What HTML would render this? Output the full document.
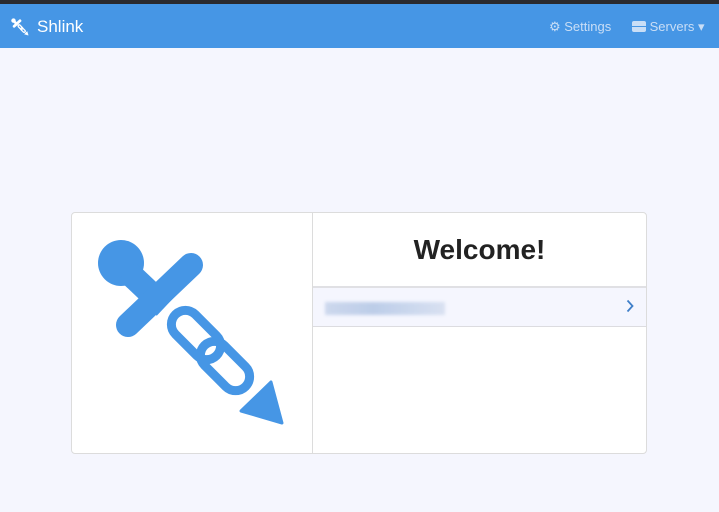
<!DOCTYPE html>
<html><head><meta charset="utf-8"><style>
*{box-sizing:border-box;margin:0;padding:0}
body{width:719px;height:512px;background:#f5f6fe;font-family:"Liberation Sans",sans-serif;overflow:hidden;position:relative}
.top{position:absolute;left:0;top:0;width:719px;height:4px;background:#2a2a2e}
.nav{position:absolute;left:0;top:4px;width:719px;height:44px;background:#4696e5;color:#fff}
.brand{position:absolute;left:37px;top:13px;font-size:17px}
.nr{position:absolute;top:15px;font-size:13px;color:#c9def6}
.card{position:absolute;left:71px;top:212px;width:576px;height:242px;background:#fff;border:1px solid #dcdcdc;border-radius:4px;overflow:hidden}
.div{position:absolute;left:240px;top:0;width:1px;height:100%;background:#dcdcdc}
.welcome{position:absolute;left:241px;top:0;right:0;height:73px;text-align:center;line-height:74px;font-size:28px;font-weight:bold;color:#222}
.row{position:absolute;left:241px;right:0;top:73px;height:41px;background:#f5f6fe;border-top:2px solid #e0e0e4;border-bottom:1px solid #dcdce0}
.blur{position:absolute;left:12px;top:14px;width:120px;height:13px;background:linear-gradient(90deg,#c9d5ec,#b7c9e6 40%,#c6d4ec 70%,#d6dff0);filter:blur(1.5px);opacity:.9}
</style></head><body>
<div class="top"></div>
<div class="nav">
<svg style="position:absolute;left:9px;top:12px" width="22" height="22" viewBox="0 0 240 240">
<g fill="#fff" stroke="#fff"><circle cx="49" cy="50" r="24" stroke="none"/><line x1="55" y1="58" x2="95" y2="96" stroke-width="28"/><line x1="120" y1="52" x2="56" y2="112" stroke-width="30" stroke-linecap="round"/>
<rect x="95" y="109" width="58" height="25" rx="12.5" transform="rotate(45 124 121.5)" fill="none" stroke-width="14"/><rect x="124" y="141" width="58" height="25" rx="12.5" transform="rotate(45 153 153.5)" fill="none" stroke-width="14"/><polygon points="168,198 198,168 210,210" stroke-width="4" stroke-linejoin="round"/></g></svg>
<div class="brand">Shlink</div>
<div class="nr" style="left:549px">⚙ Settings</div>
<div class="nr" style="left:632px"><span style="display:inline-block;width:14px;height:11px;background:#4696e5;border-radius:2px;vertical-align:-1px;border-top:5px solid #c9def6;border-bottom:5px solid #c9def6"></span> Servers ▾</div>
</div>
<div class="card">
<svg style="position:absolute;left:0;top:0" width="240" height="240" viewBox="0 0 240 240">
<g fill="#4696e5" stroke="#4696e5"><circle cx="49" cy="50" r="23" stroke="none"/><line x1="55" y1="58" x2="93" y2="94" stroke-width="24"/><line x1="119" y1="52" x2="56" y2="112" stroke-width="24" stroke-linecap="round"/>
<line x1="125" y1="72" x2="75" y2="122" stroke="#fff" stroke-width="4"/>
<rect x="95" y="108" width="58" height="28" rx="14" transform="rotate(45 124 122)" fill="none" stroke-width="9"/><rect x="124" y="139" width="58" height="28" rx="14" transform="rotate(45 153 153)" fill="none" stroke-width="9"/><polygon points="169,198 199,169 210,210" stroke-width="3" stroke-linejoin="round"/></g></svg>
<div class="div"></div>
<div class="welcome">Welcome!</div>
<div class="row"><div class="blur"></div>
<svg style="position:absolute;right:12px;top:11px" width="8" height="14" viewBox="0 0 8 14"><path d="M1.5 1.5 L6.5 7 L1.5 12.5" fill="none" stroke="#3f7fc9" stroke-width="1.8"/></svg></div>
</div>
</body></html>
